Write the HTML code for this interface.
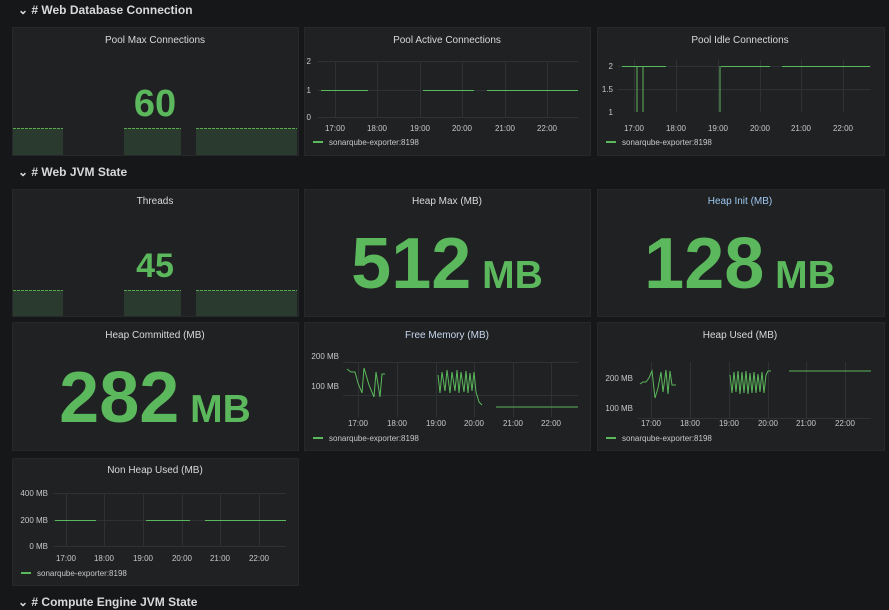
<!DOCTYPE html>
<html><head><meta charset="utf-8"><style>
html,body{margin:0;padding:0;background:#161719;width:889px;height:610px;overflow:hidden}
svg{display:block;font-family:"Liberation Sans",sans-serif}
</style></head><body>
<svg width="889" height="610" viewBox="0 0 889 610" xmlns="http://www.w3.org/2000/svg">
<rect width="889" height="610" fill="#161719"/>
<g font-size="12" fill="#d8d9da" font-weight="bold">
<text x="18" y="14">⌄ # Web Database Connection</text>
<text x="18" y="176">⌄ # Web JVM State</text>
<text x="18" y="606">⌄ # Compute Engine JVM State</text>
</g>
<g fill="#1f2123" stroke="#26282b">
<rect x="12.5" y="27.5" width="286" height="128"/>
<rect x="304.5" y="27.5" width="286" height="128"/>
<rect x="597.5" y="27.5" width="287" height="128"/>
<rect x="12.5" y="189.5" width="286" height="127"/>
<rect x="304.5" y="189.5" width="286" height="127"/>
<rect x="597.5" y="189.5" width="287" height="127"/>
<rect x="12.5" y="322.5" width="286" height="128"/>
<rect x="304.5" y="322.5" width="286" height="128"/>
<rect x="597.5" y="322.5" width="287" height="128"/>
<rect x="12.5" y="458.5" width="286" height="127"/>
</g>
<g font-size="10" fill="#d8d9da" text-anchor="middle">
<text x="155" y="43">Pool Max Connections</text>
<text x="447" y="43">Pool Active Connections</text>
<text x="740" y="43">Pool Idle Connections</text>
<text x="155" y="204">Threads</text>
<text x="447" y="204">Heap Max (MB)</text>
<text x="740" y="204" fill="#9fc8f0">Heap Init (MB)</text>
<text x="155" y="338">Heap Committed (MB)</text>
<text x="447" y="338" fill="#c8d8f0">Free Memory (MB)</text>
<text x="740" y="338">Heap Used (MB)</text>
<text x="155" y="473">Non Heap Used (MB)</text>
</g>
<g fill="#2a3a2e">
<path d="M13 155V128H63V155M124 155V128H181V155M196 155V128H297V155"/>
<path d="M13 316V290H63V316M124 316V290H181V316M196 316V290H297V316"/>
</g>
<g stroke="#56a64b" stroke-dasharray="3 1">
<path d="M13 128.5H63M124 128.5H181M196 128.5H297M13 290.5H63M124 290.5H181M196 290.5H297"/>
</g>
<g fill="#5cb85c" text-anchor="middle" font-weight="bold">
<text x="155" y="116" font-size="38">60</text>
<text x="155" y="277" font-size="34">45</text>
<text x="447" y="288" font-size="72">512<tspan font-size="39"> MB</tspan></text>
<text x="740" y="288" font-size="72">128<tspan font-size="39"> MB</tspan></text>
<text x="155" y="422" font-size="72">282<tspan font-size="39"> MB</tspan></text>
</g>
<g stroke="#2f3134" stroke-width="1">
<path d="M318 61.5H578M318 90.5H578M318 117.5H578M335.5 61V117M377.5 61V117M420.5 61V117M462.5 61V117M505.5 61V117M547.5 61V117"/>
<path d="M618 66.5H871M618 89.5H871M634.5 60V112M676.5 60V112M718.5 60V112M760.5 60V112M801.5 60V112M843.5 60V112"/>
<path d="M343 362.5H578M343 395.5H578M358.5 362V417M397.5 362V417M436.5 362V417M474.5 362V417M513.5 362V417M551.5 362V417"/>
<path d="M638 418.5H871M651.5 362V418M690.5 362V418M729.5 362V418M768.5 362V418M806.5 362V418M845.5 362V418"/>
<path d="M53 493.5H286M53 520.5H286M53 546.5H286M66.5 493V546M104.5 493V546M143.5 493V546M182.5 493V546M220.5 493V546M259.5 493V546"/>
</g>
<g font-size="8" fill="#c7c8ca">
<text x="311" y="64" text-anchor="end">2</text>
<text x="311" y="93" text-anchor="end">1</text>
<text x="311" y="120" text-anchor="end">0</text>
<text x="613" y="69" text-anchor="end">2</text>
<text x="613" y="92" text-anchor="end">1.5</text>
<text x="613" y="115" text-anchor="end">1</text>
<text x="339" y="359" text-anchor="end">200 MB</text>
<text x="339" y="389" text-anchor="end">100 MB</text>
<text x="633" y="381" text-anchor="end">200 MB</text>
<text x="633" y="411" text-anchor="end">100 MB</text>
<text x="48" y="496" text-anchor="end">400 MB</text>
<text x="48" y="523" text-anchor="end">200 MB</text>
<text x="48" y="549" text-anchor="end">0 MB</text>
<g text-anchor="middle">
<text x="335" y="131">17:00</text><text x="377" y="131">18:00</text><text x="420" y="131">19:00</text><text x="462" y="131">20:00</text><text x="505" y="131">21:00</text><text x="547" y="131">22:00</text>
<text x="634" y="131">17:00</text><text x="676" y="131">18:00</text><text x="718" y="131">19:00</text><text x="760" y="131">20:00</text><text x="801" y="131">21:00</text><text x="843" y="131">22:00</text>
<text x="358" y="426">17:00</text><text x="397" y="426">18:00</text><text x="436" y="426">19:00</text><text x="474" y="426">20:00</text><text x="513" y="426">21:00</text><text x="551" y="426">22:00</text>
<text x="651" y="426">17:00</text><text x="690" y="426">18:00</text><text x="729" y="426">19:00</text><text x="768" y="426">20:00</text><text x="806" y="426">21:00</text><text x="845" y="426">22:00</text>
<text x="66" y="561">17:00</text><text x="104" y="561">18:00</text><text x="143" y="561">19:00</text><text x="182" y="561">20:00</text><text x="220" y="561">21:00</text><text x="259" y="561">22:00</text>
</g>
<text x="329" y="145">sonarqube-exporter:8198</text>
<text x="622" y="145">sonarqube-exporter:8198</text>
<text x="329" y="441">sonarqube-exporter:8198</text>
<text x="622" y="441">sonarqube-exporter:8198</text>
<text x="37" y="576">sonarqube-exporter:8198</text>
</g>
<g stroke="#5cb85c" stroke-width="1" fill="none">
<path d="M313 142H323M606 142H616M313 438H323M606 438H616M21 573H31" stroke-width="2"/>
<path d="M321 90.5H368M423 90.5H474M487 90.5H578"/>
<path d="M622 66.5H637V112V66.5H643V112V66.5H666M720 66V112M721 66.5H770M782 66.5H870"/>
<path d="M347 369L351 372L355 372L358 383L362 393L364 368L369 385L374 397L376 372L380 397L382 374L385 374"/>
<path d="M438 375L440 393L442 372L445 391L447 370L450 393L452 372L455 391L457 370L459 393L461 372L464 392L466 371L468 393L470 373L472 391L474 372L476 392L479 402L482 405M496 407H578"/>
<path d="M640 384L643 382L646 382L649 378L652 371L655 398L658 388L661 372L663 392L666 370L668 394L670 371L672 385H676"/>
<path d="M730 375L732 393L734 372L736 392L738 371L740 394L742 372L744 393L746 371L748 394L750 373L752 393L754 372L756 393L758 374L760 392L762 372L764 393L766 375L768 371H771M789 371H871"/>
<path d="M55 520.5H96M146 520.5H190M205 520.5H286"/>
</g>
</svg>
</body></html>
